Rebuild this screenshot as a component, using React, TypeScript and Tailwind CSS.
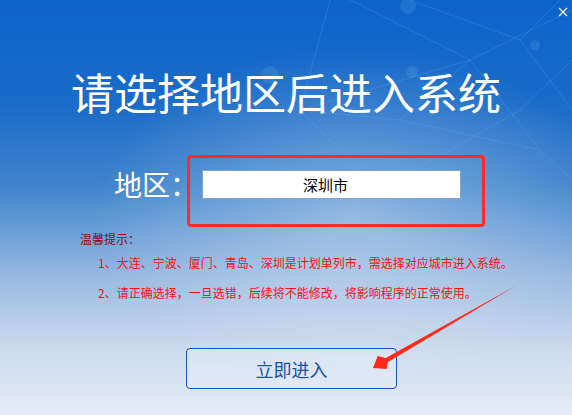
import { useState } from "react";

const notes = [
  "1、大连、宁波、厦门、青岛、深圳是计划单列市，需选择对应城市进入系统。",
  "2、请正确选择，一旦选错，后续将不能修改，将影响程序的正常使用。",
];

const font = "font-['Microsoft_YaHei','Noto_Sans_CJK_SC',sans-serif]";

function NetLines() {
  // faint network pattern in the top right of the backdrop
  return (
    <svg className="absolute inset-0 pointer-events-none" width="572" height="415" viewBox="0 0 572 415">
      <g stroke="#7fc0ff" strokeOpacity="0.2" strokeWidth="1" fill="none">
        <path d="M330 0 L300 110 L380 190" />
        <path d="M300 110 L470 60 L572 10" />
        <path d="M350 0 L470 60 L540 150" />
        <path d="M410 0 L520 40 L572 110" />
        <path d="M470 60 L400 120 L300 110" />
        <path d="M400 120 L540 150 L572 180" />
        <path d="M520 40 L560 0" />
        <path d="M380 190 L520 110 L572 60" />
      </g>
      <g fill="#8fd0ff" fillOpacity="0.14">
        <circle cx="408" cy="6" r="8" />
        <circle cx="412" cy="72" r="6" />
        <circle cx="535" cy="45" r="5" />
        <circle cx="270" cy="75" r="9" />
      </g>
    </svg>
  );
}

function Arrow() {
  return (
    <svg className="absolute inset-0 pointer-events-none" width="572" height="415" viewBox="0 0 572 415">
      <path
        d="M373 368 L377.7 356 L385.8 358.1 L517 285 L388 361.9 L386.5 369 Z"
        fill="#ff2a1a"
      />
    </svg>
  );
}

export default function App() {
  const [city] = useState("深圳市");

  return (
    <div
      className={`relative w-[572px] h-[415px] overflow-hidden ${font} bg-[radial-gradient(ellipse_260px_170px_at_62%_52%,rgba(255,255,255,0.35),rgba(255,255,255,0)),linear-gradient(to_bottom,#0c63c8_0%,#1a6cc8_25%,#3f84cc_45%,#9dbce2_68%,#cddcee_85%,#e4ebf5_100%)]`}
    >
      <NetLines />

      {/* close */}
      <button className="absolute top-[7px] right-[4px] w-[10px] h-[10px]">
        <svg width="10" height="10" viewBox="0 0 10 10">
          <path d="M1 1 L9 9 M9 1 L1 9" stroke="#ffffff" strokeWidth="1.2" />
        </svg>
      </button>

      <div className="relative flex flex-col">
        <h1 className="mt-[70px] text-center text-[43px] leading-none text-white font-normal">
          请选择地区后进入系统
        </h1>

        <div className="mt-[42px] ml-[114px] flex items-start">
          <span className="mt-[15px] w-[73px] whitespace-nowrap overflow-visible text-[28px] leading-none text-white">
            地区：
          </span>
          <div className="w-[298px] h-[72px] border-[3px] border-[#ff2a2a] rounded-[4px] pl-[12px] pt-[12px]">
            <div className="w-[259px] h-[29px] bg-white border border-[#7aa6d6] pr-[12px] text-center text-[15px] leading-[27px] text-black">
              {city}
            </div>
          </div>
        </div>

        <p className="mt-[6px] ml-[80px] text-[12px] leading-none text-[#8a0f14]">温馨提示：</p>
        <div className="ml-[98px] mt-[12px] flex flex-col gap-[18px]">
          {notes.map((n) => (
            <p key={n} className="text-[12px] leading-none text-[#ff1010]">
              {n}
            </p>
          ))}
        </div>

        <button className="mt-[49px] ml-[186px] w-[211px] h-[41px] border-[1.5px] border-[#1758bd] rounded-[4px] bg-white/20 text-[18px] leading-none text-[#1a52aa]">
          立即进入
        </button>
      </div>

      <Arrow />
    </div>
  );
}
